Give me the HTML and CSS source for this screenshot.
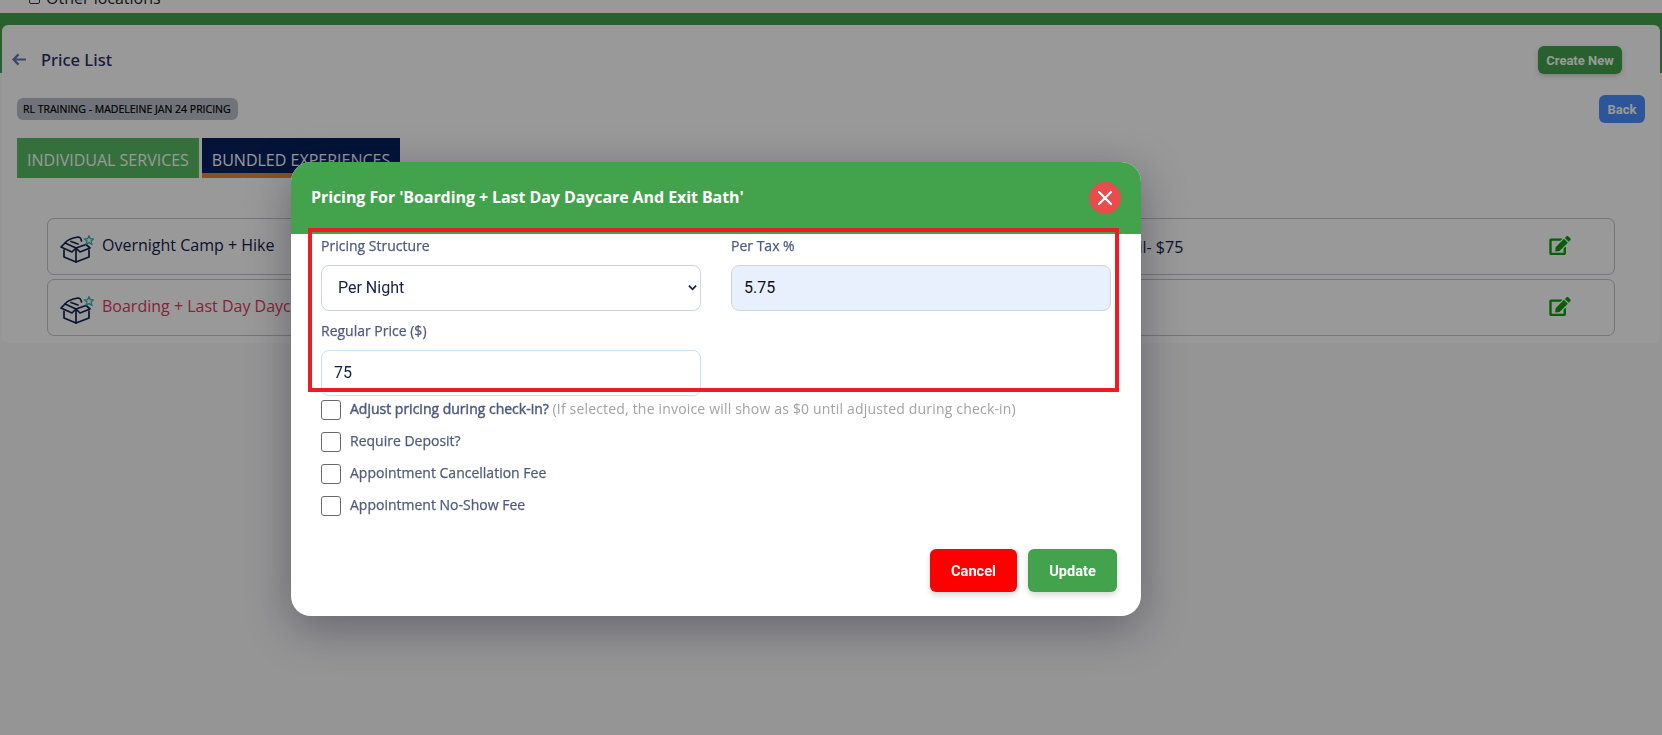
FILE: index.html
```html
<!DOCTYPE html>
<html lang="en">
<head>
<meta charset="utf-8">
<title>Price List</title>
<link rel="stylesheet" href="styles.css">
</head>
<body>
<div class="page">
  <div class="top-strip">
    <label class="loc"><span class="loc-box"></span>Other locations</label>
  </div>
  <div class="green-frame">
    <section class="card">
      <header class="head-row">
        <div class="title-wrap">
          <svg class="back-arrow" viewBox="0 0 16 14"><path d="M15 7H2M7 1.500 1.500 7 7 12.500" fill="none" stroke="#5f7bb5" stroke-width="2.400"/></svg>
          <h1 class="title">Price List</h1>
        </div>
        <button class="btn-create">Create New</button>
      </header>
      <div class="chip-row">
        <span class="chip">RL TRAINING - MADELEINE JAN 24 PRICING</span>
        <button class="btn-back">Back</button>
      </div>
      <div class="tabs">
        <div class="tab tab-green">INDIVIDUAL SERVICES</div>
        <div class="tab tab-navy">BUNDLED EXPERIENCES</div>
      </div>
      <div class="rows">
        <div class="row">
          <svg class="box-icon" viewBox="0 0 34 28"><g fill="none" stroke="#10234f" stroke-width="1.700" stroke-linejoin="round" stroke-linecap="round"><path d="M4 15v7l12 5 13-5v-7"/><path d="M16 13v14"/><path d="M16 13 5 8l-4 4 11 5 4-4"/><path d="M16 13l10-3.500 4 3.500-10 4-4-4"/><path d="M5 8C7 5 12 3 18 2c2 0 3 1 3.500 4"/><path d="M11 6.500l7 2.500"/></g><path d="M29 .8l1.300 2.900 3.100.3-2.300 2.100.7 3.100-2.800-1.600-2.800 1.600.7-3.100L24.600 4l3.100-.3z" fill="none" stroke="#2fb0b0" stroke-width="1.300"/></svg>
          <span class="row-name">Overnight Camp + Hike</span>
          <span class="row-price">Retail- $75</span>
          <svg class="edit-icon" viewBox="0 0 576 512"><path d="M402.600 83.200l90.200 90.200c3.800 3.800 3.800 10 0 13.800L274.400 405.600l-92.800 10.300c-12.400 1.400-22.900-9.100-21.500-21.500l10.300-92.800L388.800 83.200c3.800-3.800 10-3.800 13.800 0zm162-22.900l-48.800-48.800c-15.200-15.200-39.900-15.200-55.200 0l-35.400 35.400c-3.800 3.800-3.800 10 0 13.800l90.200 90.200c3.800 3.800 10 3.800 13.800 0l35.400-35.400c15.200-15.300 15.200-40 0-55.200zM384 346.200V448H64V128h229.800c3.200 0 6.200-1.300 8.500-3.500l40-40c7.600-7.600 2.200-20.500-8.500-20.500H48C21.500 64 0 85.500 0 112v352c0 26.500 21.500 48 48 48h352c26.500 0 48-21.500 48-48V306.200c0-10.700-12.900-16-20.500-8.500l-40 40c-2.200 2.300-3.500 5.300-3.500 8.500z"/></svg>
        </div>
        <div class="row">
          <svg class="box-icon" viewBox="0 0 34 28"><g fill="none" stroke="#10234f" stroke-width="1.700" stroke-linejoin="round" stroke-linecap="round"><path d="M4 15v7l12 5 13-5v-7"/><path d="M16 13v14"/><path d="M16 13 5 8l-4 4 11 5 4-4"/><path d="M16 13l10-3.500 4 3.500-10 4-4-4"/><path d="M5 8C7 5 12 3 18 2c2 0 3 1 3.500 4"/><path d="M11 6.500l7 2.500"/></g><path d="M29 .8l1.300 2.900 3.100.3-2.300 2.100.7 3.100-2.800-1.600-2.800 1.600.7-3.100L24.600 4l3.100-.3z" fill="none" stroke="#2fb0b0" stroke-width="1.300"/></svg>
          <span class="row-name row-name-red">Boarding + Last Day Daycare And Exit Bath</span>
          <span class="row-price"></span>
          <svg class="edit-icon" viewBox="0 0 576 512"><path d="M402.600 83.200l90.200 90.200c3.800 3.800 3.800 10 0 13.800L274.400 405.600l-92.800 10.300c-12.400 1.400-22.900-9.100-21.500-21.500l10.300-92.800L388.800 83.200c3.800-3.800 10-3.800 13.800 0zm162-22.900l-48.800-48.800c-15.200-15.200-39.900-15.200-55.200 0l-35.400 35.400c-3.800 3.800-3.800 10 0 13.800l90.200 90.200c3.800 3.800 10 3.800 13.800 0l35.400-35.400c15.200-15.300 15.200-40 0-55.200zM384 346.200V448H64V128h229.800c3.200 0 6.200-1.300 8.500-3.500l40-40c7.600-7.600 2.200-20.500-8.500-20.500H48C21.500 64 0 85.500 0 112v352c0 26.500 21.500 48 48 48h352c26.500 0 48-21.500 48-48V306.200c0-10.700-12.900-16-20.500-8.500l-40 40c-2.200 2.300-3.500 5.300-3.500 8.500z"/></svg>
        </div>
      </div>
    </section>
  </div>
</div>

<div class="backdrop"></div>

<div class="modal">
  <div class="modal-head">
    <h2 class="modal-title">Pricing For 'Boarding + Last Day Daycare And Exit Bath'</h2>
    <button class="modal-close" aria-label="Close">
      <svg viewBox="0 0 16 16"><path d="M2 2l12 12M14 2 2 14" stroke="#fff" stroke-width="2.200" stroke-linecap="round"/></svg>
    </button>
  </div>
  <div class="modal-body">
    <div class="annotation"></div>
    <div class="form-grid">
      <div class="field">
        <label class="field-label">Pricing Structure</label>
        <div class="control control-select">Per Night
          <svg class="chev" viewBox="0 0 10 7"><path d="M1 1.500 5 5.500 9 1.500" fill="none" stroke="#14204e" stroke-width="2"/></svg>
        </div>
      </div>
      <div class="field">
        <label class="field-label">Per Tax %</label>
        <div class="control control-filled">5.75</div>
      </div>
      <div class="field">
        <label class="field-label">Regular Price ($)</label>
        <div class="control control-focus">75</div>
      </div>
    </div>
    <ul class="checks">
      <li class="check"><span class="box"></span><span class="check-label"><b class="strong">Adjust pricing during check-in?</b> <span class="hint">(If selected, the invoice will show as $0 until adjusted during check-in)</span></span></li>
      <li class="check"><span class="box"></span><span class="check-label">Require Deposit?</span></li>
      <li class="check"><span class="box"></span><span class="check-label">Appointment Cancellation Fee</span></li>
      <li class="check"><span class="box"></span><span class="check-label">Appointment No-Show Fee</span></li>
    </ul>
    <div class="modal-foot">
      <button class="btn btn-cancel">Cancel</button>
      <button class="btn btn-update">Update</button>
    </div>
  </div>
</div>
</body>
</html>
```

FILE: styles.css
```css
* { box-sizing: border-box; }
html, body { margin: 0; padding: 0; height: 100%; overflow: hidden; }
body { background: #f8f8fb; font-family: "Open Sans", sans-serif; color: #14204e; }

.page { width: 1662px; }

.top-strip {
  height: 13px;
  background: #fff;
  display: flex;
  align-items: flex-end;
  padding-left: 29px;
  overflow: hidden;
}
.loc {
  display: flex;
  align-items: center;
  gap: 6px;
  font-size: 16px;
  line-height: 20px;
  color: #222;
  flex: none;
  height: 20px;
  margin-bottom: 5px;
}
.loc-box { width: 11px; height: 11px; border: 1.500px solid #333; border-radius: 2px; }

.green-frame {
  background: linear-gradient(#43a24c 0 60px, #f8f8fb 60px);
  padding: 12px 2px 0;
}
.card {
  background: #fff;
  border-radius: 6px;
  height: 318px;
  padding: 21px 0 0 15px;
}

.head-row {
  display: flex;
  justify-content: space-between;
  align-items: center;
  padding-right: 38px;
  height: 28px;
}
.title-wrap { display: flex; align-items: center; gap: 14px; margin: -2px 0 0 -5px; }
.back-arrow { width: 15px; height: 13px; }
.title { margin: 0; font-size: 16.500px; font-weight: 500; font-family: "Noto Sans", sans-serif; color: #2a2f63; }
.btn-create {
  width: 84px;
  height: 28px;
  border: 0;
  border-radius: 6px;
  background: #43a24c;
  color: #fff;
  font: 700 13px Roboto, sans-serif;
  padding: 0;
  box-shadow: 0 2px 5px rgba(0,0,0,.18);
}

.chip-row {
  display: flex;
  justify-content: space-between;
  align-items: flex-start;
  padding-right: 15px;
  margin-top: 21px;
  height: 40px;
}
.chip {
  margin-top: 3px;
  width: 221px;
  height: 22px;
  border-radius: 6px;
  background: #bbc2cb;
  color: #000;
  font-size: 10.500px;
  font-weight: 500;
  -webkit-text-stroke: .2px #000;
  line-height: 22px;
  padding-left: 6px;
  white-space: nowrap;
}
.btn-back {
  width: 46px;
  height: 28px;
  border: 0;
  border-radius: 6px;
  background: #4c8eff;
  color: #fff;
  font: 700 13px Roboto, sans-serif;
  padding: 0;
}

.tabs { display: flex; gap: 3px; margin-top: 3px; height: 40px; }
.tab {
  height: 40px;
  font-size: 16px;
  line-height: 44px;
  text-align: center;
  white-space: nowrap;
}
.tab-green { width: 182px; background: #58bb65; color: #fff; }
.tab-navy { width: 198px; background: #05215f; color: #fff; border-bottom: 5px solid #e5893f; }

.rows { margin-top: 40px; padding-left: 30px; width: 1598px; display: flex; flex-direction: column; gap: 4px; }
.row {
  height: 57px;
  border: 1px solid #c4c4cc;
  border-radius: 7px;
  display: grid;
  grid-template-columns: 42px 1003px 1fr 65px;
  align-items: center;
  padding-left: 12px;
  font-size: 16px;
}
.box-icon { width: 34px; height: 28px; margin-top: 5px; }
.row-name { color: #14204e; white-space: nowrap; margin-bottom: 4px; }
.row-name-red { color: #e23a5c; }
.row-price { color: #14204e; white-space: nowrap; }
.edit-icon { width: 22px; height: 19px; fill: #0a9f0a; margin-top: -2px; }

.backdrop { position: fixed; inset: 0; background: rgba(0,0,0,.4); }

.modal {
  position: absolute;
  left: 291px;
  top: 162px;
  width: 850px;
  height: 454px;
  background: #fff;
  border-radius: 20px;
  box-shadow: 0 12px 45px rgba(16,18,40,.36);
  display: flex;
  flex-direction: column;
}
.modal-head {
  height: 72px;
  flex: none;
  background: #43a24c;
  border-radius: 20px 20px 0 0;
  display: flex;
  align-items: center;
  justify-content: space-between;
  padding: 0 20px;
}
.modal-title { margin: 0 0 3px; color: #fff; font-size: 16px; font-weight: 700; letter-spacing: -.08px; }
.modal-close {
  width: 32px;
  height: 32px;
  padding: 8px;
  border: 0;
  border-radius: 50%;
  background: #e84c4c;
  display: flex;
}
.modal-close svg { width: 16px; height: 16px; }

.modal-body { position: relative; flex: 1; padding: 0 30px; display: flex; flex-direction: column; }
.annotation {
  position: absolute;
  left: 17px;
  top: -6px;
  width: 811px;
  height: 164px;
  border: 4px solid #ed1c24;
  pointer-events: none;
  z-index: 2;
}
.form-grid {
  display: grid;
  grid-template-columns: 380px 380px;
  column-gap: 30px;
  row-gap: 10px;
  margin-top: 2px;
}
.field { display: flex; flex-direction: column; }
.field-label { font-size: 14px; line-height: 20px; font-weight: 500; color: #4e5a80; -webkit-text-stroke: .25px #4e5a80; margin-bottom: 9px; }
.control {
  height: 46px;
  border: 1px solid #ced4da;
  border-radius: 8px;
  font-family: Roboto, sans-serif;
  font-size: 16px;
  line-height: 44px;
  padding-left: 12px;
  color: #14204e;
  position: relative;
}
.control-select { padding-left: 16px; }
.chev { position: absolute; right: 3px; top: 18px; width: 9px; height: 7px; }
.control-filled { background: #e8f0fe; color: #111; }
.control-focus { border-color: #c5e3f6; }

.checks { list-style: none; margin: 4px 0 0; padding: 0; display: flex; flex-direction: column; gap: 12px; }
.check { display: flex; align-items: center; height: 20px; gap: 9px; }
.box { width: 20px; height: 20px; flex: none; border: 1px solid #6a6a6a; border-radius: 3px; background: #fff; }
.check-label { font-size: 14px; font-weight: 500; color: #4e5a80; -webkit-text-stroke: .25px #4e5a80; white-space: nowrap; line-height: 18px; margin-top: -2px; }
.strong { font-weight: 500; -webkit-text-stroke: .45px #4e5a80; }
.hint { font-size: 14px; font-weight: 400; color: #a3a3a3; -webkit-text-stroke: 0; letter-spacing: .18px; }

.modal-foot { margin-top: auto; display: flex; justify-content: flex-end; gap: 11px; margin-right: -6px; padding-bottom: 24px; }
.btn {
  height: 43px;
  border: 0;
  border-radius: 6px;
  color: #fff;
  font: 700 14.600px Roboto, sans-serif;
  padding: 0;
  box-shadow: 0 3px 6px rgba(0,0,0,.16);
}
.btn-cancel { width: 87px; background: #ff0000; }
.btn-update { width: 89px; background: #43a24c; }
```
